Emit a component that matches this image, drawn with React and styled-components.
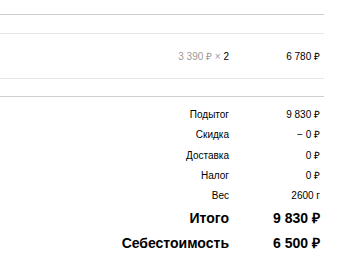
import React from "react";
import styled, { createGlobalStyle } from "styled-components";

const GlobalStyle = createGlobalStyle`
  body {
    margin: 0;
    background: #fff;
    font-family: "Liberation Sans", Arial, sans-serif;
    color: #000;
  }
`;

const Page = styled.div`
  width: 324px;
  padding-top: 14px;
`;

const Divider = styled.div`
  height: 1px;
  background: ${props => props.strong ? '#cfcfcf' : '#e6e6e6'};
`;

const HeadRow = styled.div`
  height: 18px;
`;

const Grid = styled.div`
  display: grid;
  grid-template-columns: 229px 91px;
  align-items: center;
`;

const ItemRow = styled(Grid)`
  height: 44px;
  font-size: 10px;
`;

const Cell = styled.div`
  text-align: right;
  white-space: nowrap;
`;

const Muted = styled.span`
  color: #9a9a9a;
`;

const Gap = styled.div`
  height: 17px;
`;

const Summary = styled(Grid)`
  padding-top: 8px;
`;

const Label = styled(Cell)`
  font-size: ${props => props.big ? '14px' : '10px'};
  font-weight: ${props => props.big ? 700 : 400};
  line-height: ${props => props.big ? '24.5px' : '20.25px'};
`;

const rows = [
  ['Подытог', '9 830 ₽'],
  ['Скидка', '− 0 ₽'],
  ['Доставка', '0 ₽'],
  ['Налог', '0 ₽'],
  ['Вес', '2600 г'],
];

const totals = [
  ['Итого', '9 830 ₽'],
  ['Себестоимость', '6 500 ₽'],
];

export default function App() {
  return (
    <>
      <GlobalStyle />
      <Page>
        <Divider strong />
        <HeadRow />
        <Divider />
        <ItemRow>
          <Cell><Muted>3 390 ₽ × </Muted>2</Cell>
          <Cell>6 780 ₽</Cell>
        </ItemRow>
        <Divider />
        <Gap />
        <Divider strong />
        <Summary>
          {rows.map(([label, value]) => (
            <React.Fragment key={label}>
              <Label>{label}</Label>
              <Label>{value}</Label>
            </React.Fragment>
          ))}
          {totals.map(([label, value]) => (
            <React.Fragment key={label}>
              <Label big>{label}</Label>
              <Label big>{value}</Label>
            </React.Fragment>
          ))}
        </Summary>
      </Page>
    </>
  );
}
